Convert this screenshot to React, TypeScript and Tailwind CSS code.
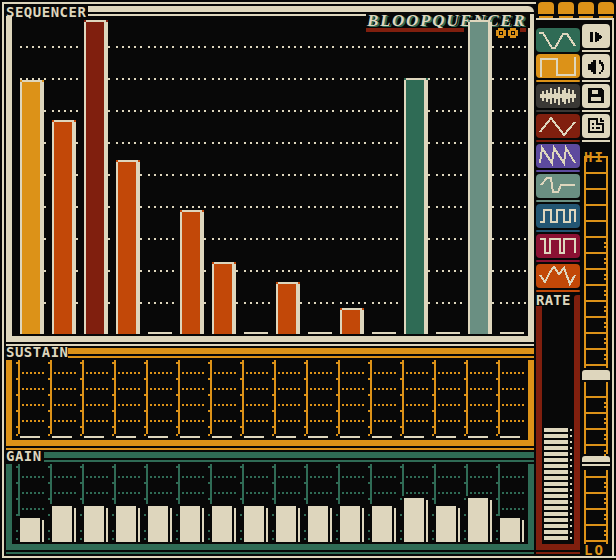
const BLACK = "#080808";
const CREAM = "#ded6bd";

const SEQ_BARS = [
    { top: 80, fill: "bg-[#dc9218]" },
    { top: 120, fill: "bg-[#c24808]" },
    { top: 20, fill: "bg-[#801f0e]" },
    { top: 160, fill: "bg-[#c24808]" },
    { top: 332, fill: "" },
    { top: 210, fill: "bg-[#c24808]" },
    { top: 262, fill: "bg-[#c24808]" },
    { top: 332, fill: "" },
    { top: 282, fill: "bg-[#c24808]" },
    { top: 332, fill: "" },
    { top: 308, fill: "bg-[#c24808]" },
    { top: 332, fill: "" },
    { top: 78, fill: "bg-[#2f6b55]" },
    { top: 332, fill: "" },
    { top: 20, fill: "bg-[#6a8f82]" },
    { top: 332, fill: "" },
];

const SUSTAIN = Array.from({ length: 16 }, () => 2);
const GAIN = [24, 36, 36, 36, 36, 36, 36, 36, 36, 36, 36, 36, 44, 36, 44, 24];

const WAVES = [
    { body: "bg-[#2f6b55]", strip: "", pressed: true, points: "3,5 7,5 16,20 19,20 27,6 31,6 39,18" },
    { body: "bg-[#dc9218]", strip: "bg-[#dc9218]", points: "5,23 5,5 21,5 21,21 39,21 39,3" },
    { body: "bg-[#3a3835]", strip: "bg-[#3a3835]", noise: true },
    { body: "bg-[#801f0e]", strip: "bg-[#801f0e]", points: "4,18 15,4 28,21 39,8" },
    { body: "bg-[#5d4a9e]", strip: "bg-[#5d4a9e]", points: "4,19 6,4 16,19 18,4 28,19 30,4 39,19" },
    { body: "bg-[#6a8f82]", strip: "bg-[#6a8f82]", points: "5,11 11,4 15,4 17,18 22,18 25,11 39,11" },
    { body: "bg-[#235673]", strip: "bg-[#235673]", points: "4,18 8,18 8,6 15,6 15,18 21,18 21,6 28,6 28,18 34,18 34,6 39,6 39,18" },
    { body: "bg-[#8b1133]", strip: "bg-[#8b1133]", points: "4,5 9,5 9,19 14,19 14,5 24,5 24,19 28,19 28,5 39,5 39,19" },
    { body: "bg-[#c24808]", strip: "bg-[#c24808]", points: "4,11 9,18 14,8 18,3 23,10 28,4 34,20 39,11" },
];

const NOISE = [2, 5, 2, 6, 3, 8, 2, 7, 3, 9, 2, 6, 8, 3, 7, 2, 6, 2];

function PanelHead({ label, width, bar, line }: { label: string; width: string; bar: string; line: string }) {
    return (
        <div className="flex h-[14px] pl-[2px]">
            <span className={`h-[12px] pt-[1px] font-['DejaVu_Sans_Mono',monospace] text-[14px] leading-[11px] font-bold tracking-[0.5px] text-[#ded6bd] ${width}`}>
                {label}
            </span>
            <div className="flex flex-1 flex-col pt-[2px]">
                <div className={`h-[6px] ${bar}`} />
                <div className={`mt-[2px] h-[2px] ${line}`} />
            </div>
        </div>
    );
}

function Grid({ color }: { color: string }) {
    const cols = Array.from({ length: 16 }, (_, i) => i);
    return (
        <svg width="516" height="80" className="absolute top-0 left-0" shapeRendering="crispEdges">
            {cols.map((i) => (
                <g key={i} fill={color}>
                    <rect x={6 + 32 * i} y="0" width="2" height="80" />
                    {[2, 18, 34, 50, 66, 74].map((y) => (
                        <rect key={y} x={4 + 32 * i} y={y} width="2" height="2" />
                    ))}
                    {[12, 28, 44, 60].map((y) =>
                        [0, 1, 2, 3, 4, 5].map((j) => (
                            <rect key={y + "-" + j} x={10 + 32 * i + 4 * j} y={y} width="2" height="2" />
                        ))
                    )}
                </g>
            ))}
        </svg>
    );
}

function BarPanel({
    label,
    width,
    values,
    color,
    bar,
    border,
}: {
    label: string;
    width: string;
    values: number[];
    color: string;
    bar: string;
    border: string;
}) {
    return (
        <div className="h-[104px]">
            <PanelHead label={label} width={width} bar={bar} line={bar} />
            <div className={`ml-[2px] h-[86px] border-x-[6px] border-b-[6px] ${border}`}>
                <div className="relative h-[80px] overflow-hidden bg-[#080808]">
                    <Grid color={color} />
                    <div className="relative grid h-[80px] grid-cols-[repeat(16,32px)] pl-[6px]">
                        {values.map((h, i) => (
                            <div key={i} className="flex flex-col justify-end">
                                <div className="flex w-[30px] gap-[2px] bg-[#080808] p-[2px]">
                                    <div className="w-[20px] bg-[#ded6bd]" style={{ height: h }} />
                                    <div className="mt-[2px] w-[2px] bg-[#ded6bd]" style={{ height: h - 2 }} />
                                </div>
                            </div>
                        ))}
                    </div>
                </div>
            </div>
            <div className={`mt-[2px] ml-[2px] h-[2px] ${bar}`} />
        </div>
    );
}

function SeqDots() {
    const rows = [30, 62, 94, 126, 158, 190, 222, 254, 286];
    const cols = Array.from({ length: 16 }, (_, i) => i);
    return (
        <svg width="516" height="320" className="absolute top-0 left-0" shapeRendering="crispEdges">
            {rows.map((y) =>
                cols.map((i) =>
                    [0, 1, 2, 3, 4].map((j) => (
                        <rect key={y + "-" + i + "-" + j} x={8 + 32 * i + 6 * j} y={y} width="2" height="2" fill={CREAM} />
                    ))
                )
            )}
        </svg>
    );
}

function Ring() {
    return (
        <svg width="10" height="10" viewBox="0 0 10 10" shapeRendering="crispEdges">
            <path fill="#dc9218" fillRule="evenodd" d="M2 0h6v2h2v6h-2v2h-6v-2h-2v-6h2zM3 3v4h4v-4z" />
            <rect x="4" y="4" width="2" height="2" fill="#dc9218" />
        </svg>
    );
}

function Sequencer() {
    return (
        <div className="relative h-[342px]">
            <div className="flex h-[12px] pt-[2px] pl-[2px]">
                <span className="h-[12px] w-[82px] pt-[1px] font-['DejaVu_Sans_Mono',monospace] text-[14px] leading-[11px] font-bold tracking-[0.5px] text-[#ded6bd]">
                    SEQUENCER
                </span>
                <div className="flex flex-1 flex-col">
                    <div className="h-[6px] rounded-tr-[6px] bg-[#ded6bd]" />
                    <div className="mt-[2px] h-[2px] bg-[#ded6bd]" />
                </div>
            </div>
            <div className="absolute top-[9px] left-[362px] w-[164px]">
                <div className="h-[15px] bg-[#080808] pl-[1px] font-['Liberation_Serif',serif] text-[17px] leading-[15px] font-bold tracking-[1.7px] text-[#ded6bd] italic [text-shadow:2px_1px_0_#2f6b55]">
                    BLOOPQUENCER
                </div>
                <div className="flex items-start">
                    <div className="h-[4px] w-[98px] bg-[#801f0e]" />
                    <div className="ml-[32px]">
                        <Ring />
                    </div>
                    <div className="ml-[2px]">
                        <Ring />
                    </div>
                    <div className="ml-[2px] h-[4px] w-[6px] bg-[#801f0e]" />
                </div>
            </div>
            <div className="ml-[2px] h-[326px] border-x-[6px] border-b-[6px] border-[#ded6bd]">
                <div className="h-[320px] overflow-hidden bg-[#080808]">
                    <div className="relative z-10 h-[320px]">
                        <SeqDots />
                        <div className="relative grid h-[320px] grid-cols-[repeat(16,32px)] pb-[2px] pl-[8px]">
                            {SEQ_BARS.map((b, i) => (
                                <div key={i} className="flex flex-col justify-end">
                                    <SeqBar top={b.top} fill={b.fill} />
                                </div>
                            ))}
                        </div>
                    </div>
                </div>
            </div>
            <div className="mt-[2px] ml-[2px] h-[2px] bg-[#ded6bd]" />
        </div>
    );
}

function SeqBar({ top, fill }: { top: number; fill: string }) {
    const height = 334 - top;
    if (!fill) return <div className="h-[2px] w-[24px] bg-[#ded6bd]" />;
    return (
        <div className="flex w-[24px] flex-col" style={{ height }}>
            <div className="flex h-[2px]">
                <div className={`w-[2px] ${fill}`} />
                <div className="flex-1 bg-[#ded6bd]" />
                <div className={`w-[2px] ${fill}`} />
            </div>
            <div className="flex flex-1">
                <div className="w-[2px] bg-[#ded6bd]" />
                <div className={`flex-1 ${fill}`} />
                <div className="w-[4px] bg-[#ded6bd]" />
            </div>
        </div>
    );
}

function WaveButton({ wave }: { wave: (typeof WAVES)[number] }) {
    return (
        <div className={`h-[30px] w-[44px] ${wave.pressed ? "pt-[4px]" : ""}`}>
            <div className={`h-[24px] rounded-[4px] ${wave.body}`}>
                <svg width="44" height="24" className="block" shapeRendering="crispEdges">
                    {wave.points && <polyline points={wave.points} fill="none" stroke={CREAM} strokeWidth="2" />}
                    {wave.noise &&
                        NOISE.map((h, i) => <rect key={i} x={4 + i * 2} y={12 - h} width="2" height={h * 2} fill={CREAM} />)}
                </svg>
            </div>
            {!wave.pressed && <div className={`mt-[2px] h-[2px] rounded-[1px] ${wave.strip}`} />}
        </div>
    );
}

function ToolButton({ children }: { children: React.ReactNode }) {
    return (
        <div className="h-[30px] w-[28px]">
            <div className="h-[24px] rounded-[4px] bg-[#ded6bd]">
                <svg width="28" height="24" className="block" shapeRendering="crispEdges">
                    {children}
                </svg>
            </div>
            <div className="mt-[2px] h-[2px] bg-[#ded6bd]" />
        </div>
    );
}

function Ladder() {
    const rungs = Array.from({ length: 25 }, (_, i) => i * 16).filter((y) => y !== 224 && y !== 304);
    const gaps = [
        [0, 212],
        [226, 298],
        [314, 388],
    ];
    return (
        <svg width="24" height="388" className="absolute top-0 left-[2px]" shapeRendering="crispEdges">
            <g fill="#dc9218">
                {gaps.map(([a, b]) => (
                    <g key={a}>
                        <rect x="0" y={a} width="2" height={b - a} />
                        <rect x="22" y={a} width="2" height={b - a} />
                    </g>
                ))}
                {rungs.map((y) => (
                    <rect key={y} x="0" y={y} width="24" height="2" />
                ))}
                {rungs
                    .filter((y) => y >= 80)
                    .map((y) => (
                        <g key={y}>
                            <rect x="20" y={y + 6} width="2" height="2" />
                            <rect x="20" y={y + 10} width="2" height="2" />
                        </g>
                    ))}
            </g>
        </svg>
    );
}

function RightColumn() {
    return (
        <div className="flex h-[538px] border-t-2 border-r-2 border-[#ded6bd] pt-[4px]">
            <div className="w-[44px]">
                {WAVES.map((w, i) => (
                    <WaveButton key={i} wave={w} />
                ))}
                <div className="flex h-[12px] items-start justify-between">
                    <span className="pt-[1px] font-['DejaVu_Sans_Mono',monospace] text-[14px] leading-[10px] font-bold tracking-[0.2px] text-[#ded6bd]">
                        RATE
                    </span>
                    <div className="mt-[1px] h-[11px] w-[6px] rounded-tl-[3px] bg-[#801f0e]" />
                </div>
                <div className="h-[244px] border-x-[6px] border-b-[6px] border-[#801f0e]">
                    <div className="flex h-[238px] flex-col justify-end gap-[2px] bg-[#080808] pb-[4px] pl-[2px]">
                        {Array.from({ length: 19 }, (_, i) => (
                            <div key={i} className="flex h-[4px] items-center gap-[2px]">
                                <div className="h-[4px] w-[24px] bg-[#ded6bd]" />
                                <div className="h-[2px] w-[2px] bg-[#ded6bd]" />
                            </div>
                        ))}
                    </div>
                </div>
                <div className="mt-[2px] h-[2px] bg-[#801f0e]" />
            </div>
            <div className="ml-[2px] w-[28px]">
                <ToolButton>
                    <path fill={BLACK} d="M8 8h3v10h-3zM13 8h2v1h2v2h2v1h1v2h-1v1h-2v2h-2v1h-2z" />
                </ToolButton>
                <ToolButton>
                    <path fill={BLACK} d="M6 10h3v-2h2v-2h3v14h-3v-2h-2v-2h-3z" />
                    <path fill={BLACK} d="M17 6h2v2h2v2h1v6h-1v2h-2v2h-2v-2h2v-2h1v-4h-1v-2h-2z" />
                </ToolButton>
                <ToolButton>
                    <path fill={BLACK} fillRule="evenodd" d="M6 4h13l3 3v12h-16zM10 6v4h6v-4zM9 13v4h10v-4z" />
                </ToolButton>
                <ToolButton>
                    <path
                        fill={BLACK}
                        fillRule="evenodd"
                        d="M6 4h10v5h6v10h-16zM8 6v11h12v-6h-6v-5zM10 9h2v2h-2zM10 13h2v2h-2zM14 13h4v2h-4z"
                    />
                    <path fill={BLACK} d="M18 4h2v2h2v2h-4z" />
                </ToolButton>
                <div className="h-[12px] pl-[2px]">
                    <span className="pt-[1px] font-['DejaVu_Sans_Mono',monospace] text-[14px] leading-[10px] font-bold tracking-[2px] text-[#dc9218]">
                        HI
                    </span>
                </div>
                <div className="relative h-[388px]">
                    <Ladder />
                    <div className="absolute top-[214px] left-0 h-[10px] w-[28px] rounded-t-[3px] bg-[#ded6bd]" />
                    <div className="absolute top-[300px] left-0 w-[28px]">
                        <div className="h-[6px] rounded-t-[3px] bg-[#ded6bd]" />
                        <div className="mt-[2px] h-[2px] bg-[#ded6bd]" />
                    </div>
                </div>
                <div className="pt-[1px] pl-[2px] font-['DejaVu_Sans_Mono',monospace] text-[14px] leading-[10px] font-bold tracking-[2px] text-[#dc9218]">
                    LO
                </div>
            </div>
        </div>
    );
}

export default function App() {
    return (
        <div className="h-[560px] w-[616px] overflow-hidden bg-[#080808] pt-[2px] pl-[2px]">
            <div className="flex h-[556px] border-b-2 border-l-2 border-[#ded6bd]">
                <div className="w-[532px] border-t-2 border-[#ded6bd] pr-[2px]">
                    <Sequencer />
                    <BarPanel
                        label="SUSTAIN"
                        width="w-[62px]"
                        values={SUSTAIN}
                        color="#dc9218"
                        bar="bg-[#dc9218]"
                        border="border-[#dc9218]"
                    />
                    <BarPanel
                        label="GAIN"
                        width="w-[38px]"
                        values={GAIN}
                        color="#2f6b55"
                        bar="bg-[#2f6b55]"
                        border="border-[#2f6b55]"
                    />
                </div>
                <div className="w-[78px]">
                    <div className="flex h-[16px] gap-[4px] pl-[2px]">
                        {[0, 1, 2, 3].map((i) => (
                            <div key={i} className="w-[16px]">
                                <div className="h-[12px] rounded-t-[4px] bg-[#dc9218]" />
                                <div className="mx-[1px] mt-[2px] h-[2px] bg-[#dc9218]" />
                            </div>
                        ))}
                    </div>
                    <RightColumn />
                </div>
            </div>
        </div>
    );
}
